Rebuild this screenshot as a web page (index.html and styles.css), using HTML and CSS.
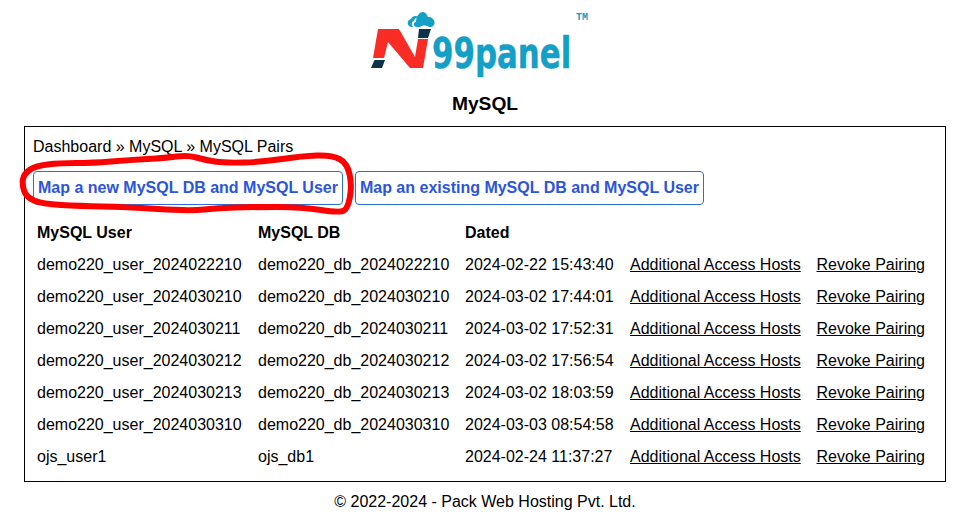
FILE: index.html
```html
<!DOCTYPE html>
<html lang="en">
<head>
<meta charset="utf-8">
<title>MySQL Pairs</title>
<link rel="stylesheet" href="styles.css">
</head>
<body>
<header class="brand">
  <svg class="logo" width="250" height="80" viewBox="360 0 250 80" aria-label="N99panel">
    <polygon class="navy" points="371,68 374.5,60 385,60 382,68"/>
    <polygon class="red" points="378,29 399,29 415,57 418,39 428,39 423,68 410,68 388,42 384,58 373,58"/>
    <polygon class="navy" points="419,29 431,29 428,38 418,38"/>
    <path class="blue" d="M412 27 C407 27 406 20 411 19 C412 16 416 15 418 17 C415 18 414 20 414 21 C412 21 411 24 413 27 Z"/>
    <path class="blue" d="M417 27 C413 27 413 22 416 22 C416 18 417 16 419 14 C421 11 426 11 428 17 C433 16 437 23 433 26 C432 27 431 27 429 27 C426 25 422 25 420 27 Z"/>
    <text class="logo-text" transform="translate(432 68) scale(0.735 1)">99panel</text>
    <text class="tm" x="576" y="20">TM</text>
  </svg>
  <h1 class="title">MySQL</h1>
</header>
<main class="panel">
  <div class="crumbs">Dashboard » MySQL » MySQL Pairs</div>
  <div class="actions">
    <a class="btn" href="#">Map a new MySQL DB and MySQL User</a>
    <a class="btn" href="#">Map an existing MySQL DB and MySQL User</a>
    <svg class="scribble" width="345" height="75" viewBox="15 145 345 75" aria-hidden="true">
      <path d="M23 179 Q24 174 29.500 170 Q35 166 47.500 164.500 Q60 163 76 163 Q92 163 111 161.500 Q130 160 147.500 159 Q165 158 176.500 156.500 Q188 155 196.500 157.500 Q205 160 215 161.500 Q225 163 243.500 162.500 Q262 162 282 159 Q302 156 317 155.500 Q332 155 339.500 159 Q347 163 349.500 174 Q352 185 350 196.500 Q348 208 344 210.500 Q340 213 321 210 Q302 207 277 207 Q252 207 235 207.500 Q218 208 204 209.500 Q190 211 157.500 209 Q125 207 102.500 206.500 Q80 206 61 205 Q42 204 34 200.500 Q26 197 24 190.500 Q22 184 23 179 Z"/>
    </svg>
  </div>
  <table class="pairs">
    <thead>
      <tr><th>MySQL User</th><th>MySQL DB</th><th>Dated</th><th></th><th></th></tr>
    </thead>
    <tbody>
      <tr><td>demo220_user_2024022210</td><td>demo220_db_2024022210</td><td>2024-02-22 15:43:40</td><td><a href="#">Additional Access Hosts</a></td><td><a href="#">Revoke Pairing</a></td></tr>
      <tr><td>demo220_user_2024030210</td><td>demo220_db_2024030210</td><td>2024-03-02 17:44:01</td><td><a href="#">Additional Access Hosts</a></td><td><a href="#">Revoke Pairing</a></td></tr>
      <tr><td>demo220_user_2024030211</td><td>demo220_db_2024030211</td><td>2024-03-02 17:52:31</td><td><a href="#">Additional Access Hosts</a></td><td><a href="#">Revoke Pairing</a></td></tr>
      <tr><td>demo220_user_2024030212</td><td>demo220_db_2024030212</td><td>2024-03-02 17:56:54</td><td><a href="#">Additional Access Hosts</a></td><td><a href="#">Revoke Pairing</a></td></tr>
      <tr><td>demo220_user_2024030213</td><td>demo220_db_2024030213</td><td>2024-03-02 18:03:59</td><td><a href="#">Additional Access Hosts</a></td><td><a href="#">Revoke Pairing</a></td></tr>
      <tr><td>demo220_user_2024030310</td><td>demo220_db_2024030310</td><td>2024-03-03 08:54:58</td><td><a href="#">Additional Access Hosts</a></td><td><a href="#">Revoke Pairing</a></td></tr>
      <tr><td>ojs_user1</td><td>ojs_db1</td><td>2024-02-24 11:37:27</td><td><a href="#">Additional Access Hosts</a></td><td><a href="#">Revoke Pairing</a></td></tr>
    </tbody>
  </table>
</main>
<footer class="foot">© 2022-2024 - Pack Web Hosting Pvt. Ltd.</footer>
</body>
</html>
```
FILE: styles.css
```css
* { box-sizing: border-box; }
html, body { margin: 0; padding: 0; }
body {
  background: #fff;
  color: #000;
  font-family: "Liberation Sans", Arial, sans-serif;
  font-size: 16px;
  line-height: 18px;
  padding: 0 20px 0 24px;
}
.brand { display: flex; flex-direction: column; align-items: center; height: 126px; }
.logo { display: block; height: 80px; }
.red { fill: #f92d25; }
.navy { fill: #0c3347; }
.blue { fill: #139fc6; }
.logo-text { fill: #139fc6; stroke: #139fc6; stroke-width: 0.5; font-family: "DejaVu Sans", sans-serif; font-weight: 700; font-size: 42px; }
.tm { fill: #139fc6; font-family: "Liberation Mono", monospace; font-weight: 700; font-size: 10px; }
.title { margin: 14px 0 0; font-size: 19.2px; line-height: 20px; font-weight: 700; }
.panel { border: 1px solid #000; height: 356px; padding: 11px 8px 0; width: 922px; }
.crumbs { height: 18px; margin-bottom: 15px; }
.actions { position: relative; display: flex; gap: 12px; height: 34px; margin-bottom: 12px; }
.btn {
  display: block;
  height: 34px;
  padding: 7px 4px;
  border: 1px solid #2d6fd8;
  border-radius: 4px;
  color: #2b55dd;
  font-weight: 700;
  text-decoration: none;
  white-space: nowrap;
}
.scribble {
  position: absolute;
  left: -18px;
  top: -26px;
  fill: none;
  stroke: #f00;
  stroke-width: 6;
  stroke-linejoin: round;
  pointer-events: none;
}
.pairs { border-collapse: separate; border-spacing: 0; }
.pairs th { text-align: left; font-weight: 700; }
.pairs th, .pairs td { height: 32px; padding: 7px 4px; white-space: nowrap; }
.pairs th:nth-child(1), .pairs td:nth-child(1) { width: 221px; }
.pairs th:nth-child(2), .pairs td:nth-child(2) { width: 207px; }
.pairs th:nth-child(3), .pairs td:nth-child(3) { width: 165px; }
.pairs th:nth-child(4), .pairs td:nth-child(4) { width: 186.500px; }
.pairs a { color: #000; }
.foot { text-align: center; margin-top: 11px; }
```
